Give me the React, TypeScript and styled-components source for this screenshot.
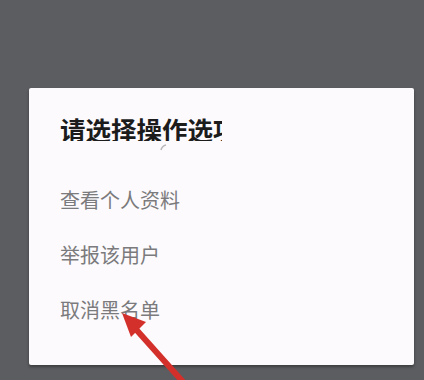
import React from "react";
import styled, { createGlobalStyle } from "styled-components";

const GlobalStyle = createGlobalStyle`
  html, body {
    margin: 0;
    padding: 0;
    background: #5c5d60;
  }
  body {
    font-family: "Noto Sans CJK SC", "Noto Sans", sans-serif;
  }
`;

const Screen = styled.div`
  position: relative;
  width: 424px;
  height: 380px;
  overflow: hidden;
  background: #5c5d60;
  padding-top: 88px;
  box-sizing: border-box;
`;

const Dialog = styled.div`
  margin-left: 29px;
  width: 385px;
  height: 277px;
  box-sizing: border-box;
  background: #fcfafc;
  border-radius: 2px;
  box-shadow: 0 2px 3px rgba(0, 0, 0, 0.35);
  padding: 28px 0 28px 31px;
  display: flex;
  flex-direction: column;
`;

/* the title is cut short in the screenshot, so it is clipped here too */
const Title = styled.div`
  width: 162px;
  overflow: hidden;
  white-space: nowrap;
  font-size: 25.5px;
  line-height: 25.5px;
  font-weight: 700;
  color: #1c1c1c;
`;

const OptionList = styled.div`
  margin-top: 31px;
  display: flex;
  flex-direction: column;
`;

const Option = styled.div`
  height: 55px;
  line-height: 55px;
  font-size: 20px;
  color: #7b7a7c;
`;

const Overlay = styled.svg`
  position: absolute;
  left: 0;
  top: 0;
  pointer-events: none;
`;

const options = ["查看个人资料", "举报该用户", "取消黑名单"];

export default function App() {
  return (
    <>
      <GlobalStyle />
      <Screen>
        <Dialog>
          <Title>请选择操作选项</Title>
          <OptionList>
            {options.map((label) => (
              <Option key={label}>{label}</Option>
            ))}
          </OptionList>
        </Dialog>
        <Overlay width="424" height="380" viewBox="0 0 424 380">
          <path d="M161 150 Q162 146 166 145" stroke="#b9b7ba" strokeWidth="1.5" fill="none" />
          <line x1="192" y1="392" x2="133" y2="326" stroke="#d3302b" strokeWidth="6" strokeLinecap="round" />
          <polygon points="122,313 146,322 131,337" fill="#d3302b" />
        </Overlay>
      </Screen>
    </>
  );
}
